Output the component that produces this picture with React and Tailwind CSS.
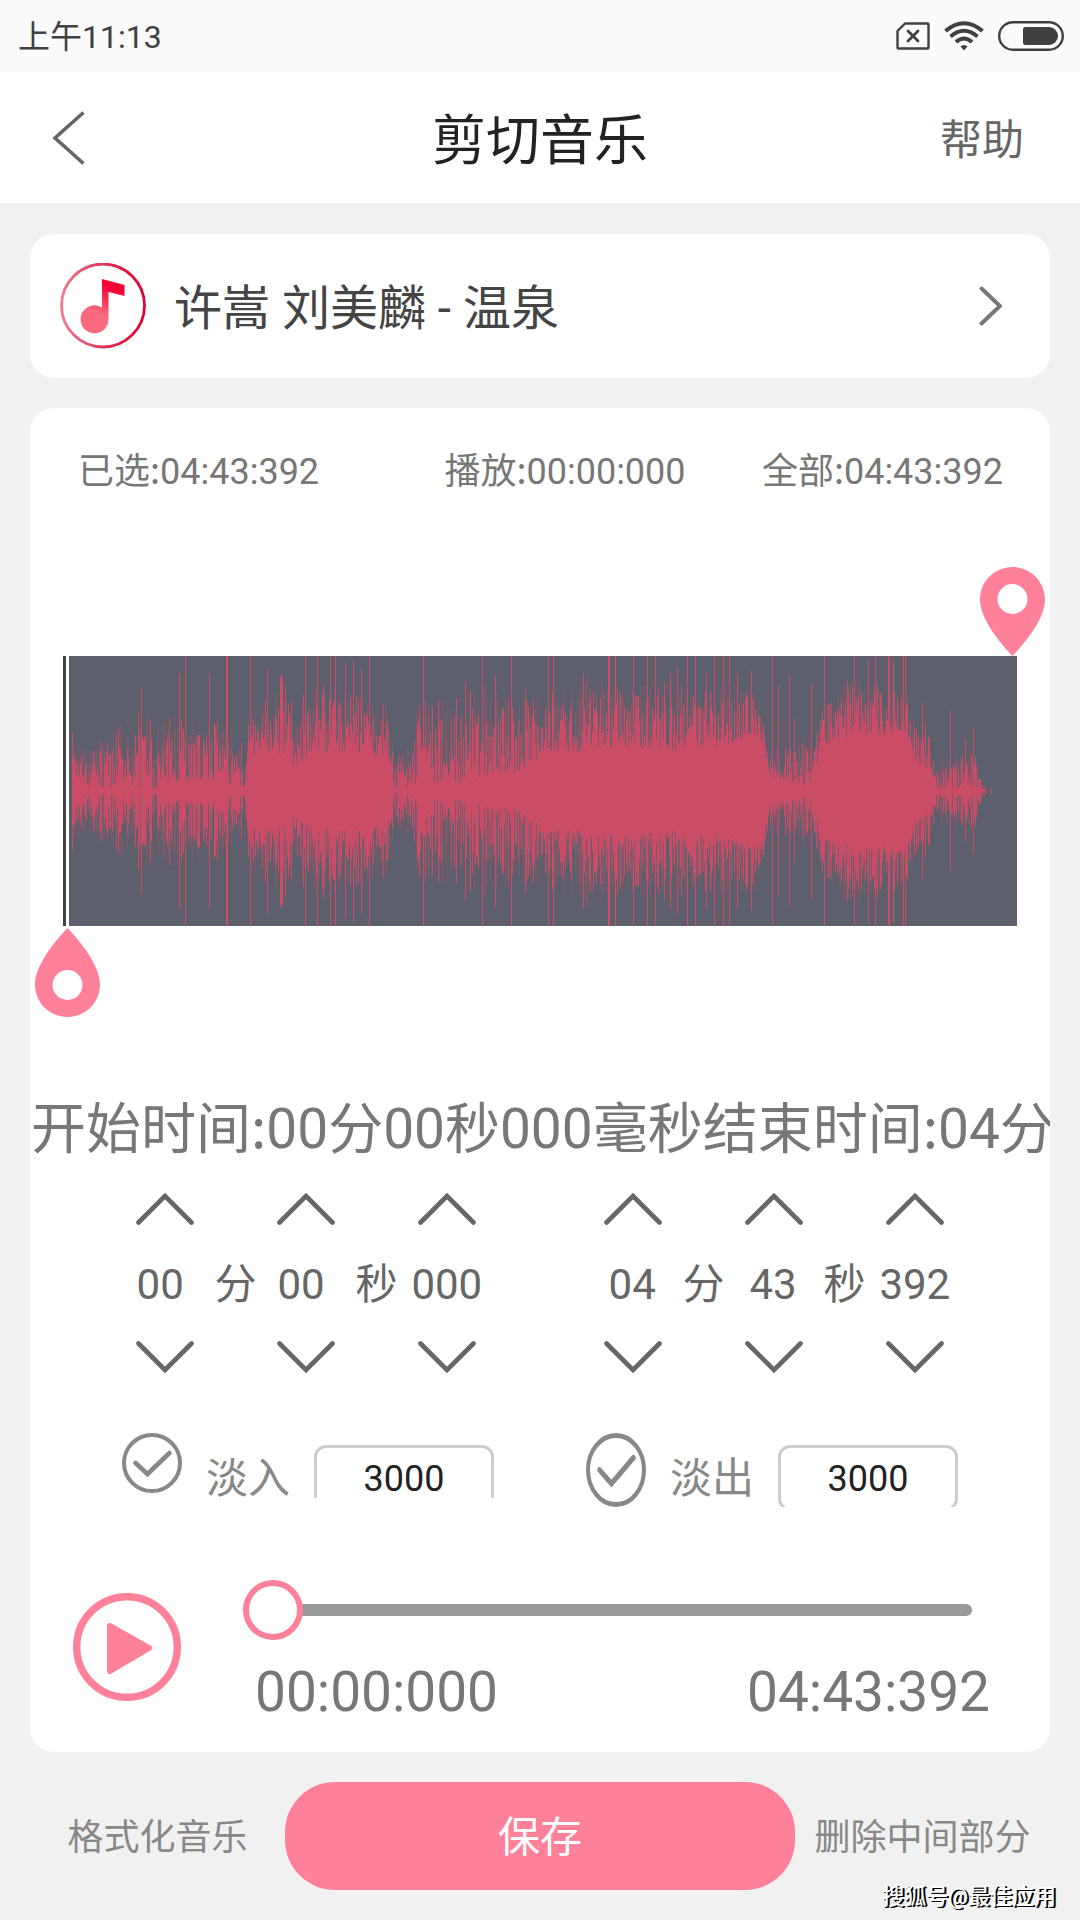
import React, { useState } from 'react';

// [x, body, peak] half heights along the track, 954 units wide
const ENVELOPE = [
  [9, 14, 60], [22, 12, 40], [24, 1, 36], [29, 14, 56], [38, 3, 50], [60, 4, 70], [66, 2, 50],
  [74, 4, 86], [96, 3, 64], [112, 10, 84], [145, 11, 72], [178, 4, 64], [181, 0, 8], [184, 34, 80],
  [200, 38, 92], [222, 36, 105], [228, 22, 90], [250, 38, 105], [285, 40, 112], [322, 34, 88],
  [328, 24, 78], [331, 2, 40], [350, 2, 55], [354, 10, 90], [392, 7, 96], [420, 14, 115],
  [450, 18, 96], [470, 24, 92], [477, 38, 100], [530, 40, 118], [570, 44, 104], [610, 40, 112],
  [640, 42, 102], [660, 44, 108], [690, 58, 108], [700, 48, 76], [703, 14, 42], [735, 8, 50],
  [746, 1, 66], [752, 18, 78], [764, 48, 98], [790, 54, 116], [822, 56, 104], [845, 52, 98],
  [852, 30, 66], [866, 20, 60], [868, 2, 34], [890, 3, 34], [902, 5, 44], [914, 3, 34],
  [918, 0, 14], [924, 0, 0],
];

const PEAKS = {
  78: 103, 116: 118, 122: 135, 146: 118, 163: 135, 164: 135, 187: 135, 204: 122, 217: 115, 218: 117,
  219: 113, 242: 135, 254: 135, 267: 135, 272: 135, 282: 128, 290: 130, 298: 122, 306: 135, 360: 135,
  402: 110, 419: 135, 432: 116, 448: 135, 462: 102, 485: 135, 490: 135, 520: 118, 545: 135, 546: 135,
  552: 135, 570: 135, 584: 135, 592: 135, 607: 118, 614: 124, 624: 135, 632: 135, 643: 118, 651: 135,
  660: 135, 666: 135, 674: 118, 688: 120, 709: 135, 715: 105, 726: 116, 731: 72, 748: 108, 761: 135,
  784: 110, 791: 135, 805: 132, 812: 135, 825: 135, 826: 135, 830: 132, 840: 135, 842: 135, 859: 88,
  862: 66, 887: 80, 902: 52, 910: 63, 928: 3,
};

function buildWave() {
  let seed = 7;
  const random = () => {
    seed = (seed * 16807) % 2147483647;
    return seed / 2147483647;
  };
  let strong = '';
  let faint = '';
  let i = 0;
  for (let x = 9; x < 930; x++) {
    while (i < ENVELOPE.length - 2 && x >= ENVELOPE[i + 1][0]) i++;
    const [x0, b0, p0] = ENVELOPE[i];
    const [x1, b1, p1] = ENVELOPE[i + 1];
    const t = Math.min(1, (x - x0) / (x1 - x0));
    const body = b0 + (b1 - b0) * t;
    const peak = p0 + (p1 - p0) * t;
    // mostly low columns with a share of tall ones
    const level = random() < 0.16 ? 0.6 + random() * 0.4 : Math.pow(random(), 1.7) * 0.75;
    const half = Math.round(PEAKS[x] || body + (peak - body) * level);
    const glow = Math.round(body + (peak - body) * random());
    if (half > 0) strong += `M${x} ${135 - half}h1v${half * 2}h-1z`;
    if (glow > half) faint += `M${x} ${135 - glow}h1v${glow * 2}h-1z`;
  }
  return { strong, faint };
}

const wave = buildWave();

function StatusBar() {
  return (
    <div className="flex h-[72px] items-center justify-between bg-[#fafafa] pr-4 pl-[18px] text-[#404040]">
      <span className="pt-0.5 text-[32px] leading-[40px]">上午11:13</span>
      <div className="flex items-center gap-[14px]">
        <svg width="34" height="28" viewBox="0 0 34 28" fill="none" stroke="currentColor" strokeWidth="2.4" strokeLinejoin="round">
          <path d="M9 1.5H31.5Q32.5 1.5 32.5 2.5V25.5Q32.5 26.5 31.5 26.5H2.5Q1.5 26.5 1.5 25.5V9Z" />
          <path d="M12 9L22 19M22 9L12 19" strokeWidth="2.8" strokeLinecap="round" />
        </svg>
        <svg width="40" height="30" viewBox="0 0 40 30" fill="none" stroke="currentColor" strokeWidth="3.8">
          <path d="M1.5 10Q20 -5.500 38.500 10" />
          <path d="M6.500 15.500Q20 4 33.500 15.500" />
          <path d="M12 21Q20 14 28 21" />
          <path d="M16.500 25.500Q20 22.500 23.500 25.500L20 29.500Z" fill="currentColor" stroke="none" />
        </svg>
        <svg width="66" height="30" viewBox="0 0 66 30" fill="none">
          <rect x="1.2" y="1.2" width="63.600" height="27.600" rx="13.800" stroke="currentColor" strokeWidth="2.4" />
          <path d="M27 6H51A9 9 0 0 1 51 24H27Q25 24 25 22V8Q25 6 27 6Z" fill="currentColor" />
        </svg>
      </div>
    </div>
  );
}

function Header() {
  return (
    <header className="grid h-[131px] grid-cols-[1fr_auto_1fr] items-center bg-white px-[50px]">
      <button type="button" aria-label="返回" className="justify-self-start text-[#666]">
        <svg width="36" height="54" viewBox="0 0 36 54" fill="none" stroke="currentColor" strokeWidth="3.6">
          <path d="M33.500 1.500L5 27L33.500 52.500" />
        </svg>
      </button>
      <h1 className="pt-2 text-[54px] leading-[64px] text-[#222]">剪切音乐</h1>
      <a href="#help" className="justify-self-end pt-1.5 pr-1.5 text-[42px] leading-[56px] text-[#666]">帮助</a>
    </header>
  );
}

function MusicIcon() {
  return (
    <svg width="86" height="86" viewBox="0 0 86 86" fill="none" className="shrink-0">
      <defs>
        <linearGradient id="ring" x1="0" y1="0" x2="1" y2="0">
          <stop offset="0" stopColor="#f0788c" />
          <stop offset="0.6" stopColor="#d92a50" />
          <stop offset="1" stopColor="#e00030" />
        </linearGradient>
        <linearGradient id="note" gradientUnits="userSpaceOnUse" x1="34" y1="58" x2="50" y2="24">
          <stop offset="0.25" stopColor="#f96a7e" />
          <stop offset="1" stopColor="#f50035" />
        </linearGradient>
      </defs>
      <circle cx="43" cy="42.500" r="41.500" stroke="url(#ring)" strokeWidth="2.800" />
      <path d="M42 16L64.500 22V33L48.500 29V56A14 14 0 1 1 42 44.500Z" fill="url(#note)" />
    </svg>
  );
}

function Pin({ className }) {
  return (
    <svg width="65" height="89" viewBox="0 0 65 89" fill="#ff8099" className={className}>
      <path fillRule="evenodd" d="M32.500 0C50.500 0 65 14.500 65 32.500C65 51 46 75 32.500 89C19 75 0 51 0 32.500C0 14.500 14.500 0 32.500 0ZM32.500 17A15 15 0 1 0 32.500 47A15 15 0 1 0 32.500 17Z" />
    </svg>
  );
}

function Waveform() {
  return (
    <div className="relative mx-[33px] mt-[162px]">
      <svg viewBox="0 0 954 270" preserveAspectRatio="none" className="block h-[270px] w-full" shapeRendering="crispEdges">
        <rect width="954" height="270" fill="#5d5f6c" />
        <rect width="3" height="270" fill="#41434b" />
        <rect x="3" width="3" height="270" fill="#fff" />
        <path d={wave.faint} fill="#cb4c66" opacity="0.3" />
        <path d={wave.strong} fill="#cb4c66" />
      </svg>
      <Pin className="absolute -right-7 bottom-full" />
      <Pin className="absolute top-full -left-7 mt-0.5 rotate-180" />
    </div>
  );
}

// A colon that follows a Chinese label is set in the Chinese face, which is wider
function Labelled({ label, children }) {
  return (
    <>
      <span className="font-['Noto_Sans_CJK_SC',sans-serif]">{label}:</span>
      {children}
    </>
  );
}

function Chevron({ down }) {
  return (
    <svg width="58" height="32" viewBox="0 0 58 32" fill="none" stroke="#666" strokeWidth="4.600" strokeLinecap="round">
      <path d={down ? 'M2.500 2.500L29 29L55.500 2.500' : 'M2.500 29.500L29 3L55.500 29.500'} />
    </svg>
  );
}

function TimeStepper({ label, minutes, seconds, millis, valueClass }) {
  const fields = ['分', '秒', '毫秒'];
  return (
    <div role="group" aria-label={label} className="grid flex-1 grid-cols-5 justify-items-center text-[42px] leading-[56px] text-[#666]">
      {fields.map((f, i) => (
        <button key={f} type="button" aria-label={`${label}${f}增加`} className={i < 2 ? 'col-span-2 w-1/2 justify-self-start' : ''}>
          <span className="flex justify-center"><Chevron /></span>
        </button>
      ))}
      <span className={`pt-8 pb-7 ${valueClass}`}>{minutes}</span>
      <span className="pt-8 pb-7">分</span>
      <span className={`pt-8 pb-7 ${valueClass}`}>{seconds}</span>
      <span className="pt-8 pb-7">秒</span>
      <span className="pt-8 pb-7">{millis}</span>
      {fields.map((f, i) => (
        <button key={f} type="button" aria-label={`${label}${f}减少`} className={i < 2 ? 'col-span-2 w-1/2 justify-self-start' : ''}>
          <span className="flex justify-center"><Chevron down /></span>
        </button>
      ))}
    </div>
  );
}

function FadeField({ id, label, className, tickClass }) {
  const [on, setOn] = useState(true);
  const [value, setValue] = useState('3000');
  return (
    <div className={`flex items-start gap-6 overflow-hidden ${className}`}>
      <div className={`relative w-[60px] shrink-0 ${tickClass}`}>
        <input
          id={id}
          type="checkbox"
          checked={on}
          onChange={(e) => setOn(e.target.checked)}
          className="absolute inset-0 size-full appearance-none"
        />
        <svg viewBox="0 0 60 60" preserveAspectRatio="none" className="pointer-events-none block size-full" fill="none" stroke="#888" strokeWidth="4">
          <circle cx="30" cy="30" r="28" />
          {on && <path d="M13.500 30L25.500 41L47.500 20" strokeWidth="4.600" strokeLinecap="round" />}
        </svg>
      </div>
      <label htmlFor={id} className="mt-4 text-[42px] leading-[60px] whitespace-nowrap text-[#888]">{label}</label>
      <input
        type="text"
        aria-label={`${label}毫秒`}
        value={value}
        onChange={(e) => setValue(e.target.value)}
        className="mt-3 h-[66px] w-[180px] shrink-0 rounded-xl border-3 border-[#ccc] bg-white pt-0.5 text-center text-[36px] text-[#222]"
      />
    </div>
  );
}

function Player() {
  const [position, setPosition] = useState(0);
  return (
    <div className="mt-[73px] flex items-start pr-12 pb-7 pl-[43px]">
      <button type="button" aria-label="播放" className="mt-[13px] shrink-0">
        <svg width="108" height="108" viewBox="0 0 108 108" fill="none" stroke="#ff8099">
          <circle cx="54" cy="54" r="50.300" strokeWidth="7.400" />
          <path d="M37 33L76 55L37 78Z" fill="#ff8099" strokeWidth="6" strokeLinejoin="round" />
        </svg>
      </button>
      <div className="ml-[62px] flex-1">
        <div className="pr-[30px]">
          <input
            type="range"
            aria-label="播放进度"
            min="0"
            max="283392"
            value={position}
            onChange={(e) => setPosition(Number(e.target.value))}
            className="block h-[60px] w-full appearance-none bg-transparent [&::-webkit-slider-runnable-track]:h-3 [&::-webkit-slider-runnable-track]:rounded-full [&::-webkit-slider-runnable-track]:bg-[#999] [&::-webkit-slider-thumb]:-mt-6 [&::-webkit-slider-thumb]:size-[60px] [&::-webkit-slider-thumb]:appearance-none [&::-webkit-slider-thumb]:rounded-full [&::-webkit-slider-thumb]:border-6 [&::-webkit-slider-thumb]:border-[#ff8099] [&::-webkit-slider-thumb]:bg-white"
          />
        </div>
        <div className="mt-5 flex justify-between px-3 text-[55px] leading-[64px] text-[#777]">
          <span>00:00:000</span>
          <span>04:43:392</span>
        </div>
      </div>
    </div>
  );
}

export default function App() {
  return (
    <div className="relative flex min-h-screen flex-col overflow-hidden bg-[#f1f1f1] font-['Roboto','Noto_Sans_CJK_SC',sans-serif]">
      <StatusBar />
      <Header />

      <main className="mt-[31px] px-[30px]">
        <button type="button" className="flex h-36 w-full items-center rounded-3xl bg-white pr-12 pl-[30px] text-left">
          <MusicIcon />
          <span className="ml-7 flex-1 pt-1.5 text-[48px] leading-[64px] text-[#444]">许嵩 刘美麟 - 温泉</span>
          <svg width="24" height="40" viewBox="0 0 24 40" fill="none" stroke="#777" strokeWidth="4" strokeLinecap="round">
            <path d="M3.500 2.500L22 20L3.500 37.500" />
          </svg>
        </button>

        <section className="mt-[30px] overflow-hidden rounded-3xl bg-white">
          <div className="grid grid-cols-[366fr_317fr_auto] pt-[38px] pr-[47px] pl-12 text-[36px] leading-[44px] text-[#777]">
            <span><Labelled label="已选">04:43:392</Labelled></span>
            <span><Labelled label="播放">00:00:000</Labelled></span>
            <span><Labelled label="全部">04:43:392</Labelled></span>
          </div>

          <Waveform />

          <p className="mt-[166px] overflow-hidden pl-px text-[55px] leading-[64px] whitespace-nowrap text-[#777]">
            <Labelled label="开始时间">00分00秒000毫秒</Labelled>
            <Labelled label="结束时间">04分</Labelled>
          </p>

          <div className="mt-8 flex gap-[116px] px-[100px]">
            <TimeStepper label="开始时间" minutes="00" seconds="00" millis="000" valueClass="pr-2.5" />
            <TimeStepper label="结束时间" minutes="04" seconds="43" millis="392" valueClass="pr-0.5" />
          </div>

          <div className="mt-[60px] flex h-[74px] items-start justify-between px-[92px]">
            <FadeField id="fade-in" label="淡入" className="h-[65px]" tickClass="h-[60px]" />
            <FadeField id="fade-out" label="淡出" className="h-[74px]" tickClass="h-[74px]" />
          </div>

          <Player />
        </section>
      </main>

      <footer className="mt-[30px] grid grid-cols-[1fr_2fr_1fr] items-center px-[30px] text-[36px] text-[#888]">
        <button type="button" className="pt-1 whitespace-nowrap">格式化音乐</button>
        <button type="button" className="h-[108px] rounded-[50px] bg-[#ff8099] pt-0.5 text-[42px] text-white">保存</button>
        <button type="button" className="pt-1 whitespace-nowrap">删除中间部分</button>
      </footer>

      <span className="absolute right-6 bottom-[7px] text-[22px] leading-[32px] font-medium text-white [text-shadow:1px_1px_0_#000,2px_1px_0_#000]">搜狐号@最佳应用</span>
    </div>
  );
}
